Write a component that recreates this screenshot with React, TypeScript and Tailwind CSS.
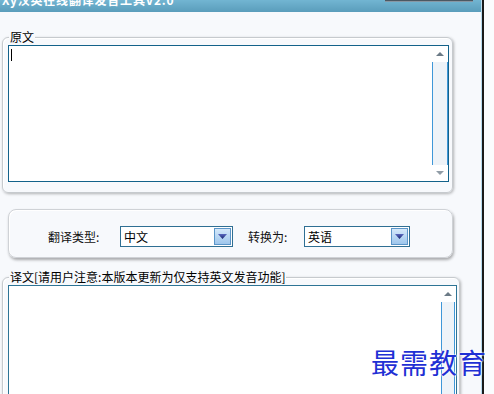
import React from "react";

function ScrollBar({ inset }: { inset?: boolean }) {
  return (
    <div className="w-[16px] h-full flex flex-col shrink-0">
      <div className="h-[16px] flex items-center justify-center">
        <svg width="8" height="4" viewBox="0 0 8 4">
          <polygon points="0,4 4,0 8,4" fill="#6b7a86" />
        </svg>
      </div>
      <div className={`flex-1 border-x border-[#3f97d8] bg-[#eef3f8] ${inset ? "mx-[1px]" : ""}`} />
      <div className="h-[16px] flex items-center justify-center">
        <svg width="8" height="4" viewBox="0 0 8 4">
          <polygon points="0,0 8,0 4,4" fill="#909ca6" />
        </svg>
      </div>
    </div>
  );
}

function DropButton() {
  return (
    <div className="w-[17px] h-[17px] border border-[#5b95c8] bg-gradient-to-b from-[#d4e8fa] to-[#9ec6ec] flex items-center justify-center">
      <svg width="9" height="5" viewBox="0 0 9 5">
        <defs>
          <linearGradient id="tri" x1="0" y1="0" x2="0" y2="1">
            <stop offset="0" stopColor="#5a68c0" />
            <stop offset="1" stopColor="#17246e" />
          </linearGradient>
        </defs>
        <polygon points="0,0 9,0 4.5,5" fill="url(#tri)" />
      </svg>
    </div>
  );
}

function Select({ value, width }: { value: string; width: string }) {
  return (
    <div className={`${width} h-[21px] border border-[#2f6f93] bg-white flex items-center p-[1px]`}>
      <span className="flex-1 pl-[2px] text-[12px] leading-[17px] text-black">{value}</span>
      <DropButton />
    </div>
  );
}

export default function App() {
  return (
    <div className="w-[494px] h-[394px] overflow-hidden relative flex bg-[#fbfcfe] font-['Noto_Sans_CJK_SC','Noto_Sans',sans-serif] text-black">
      <div className="w-[481px] h-full flex flex-col bg-[#f7f9fc] shrink-0">
        {/* title bar */}
        <div className="h-[12px] shrink-0 overflow-hidden bg-gradient-to-b from-[#72b5d2] to-[#5a9dbb] flex items-start">
          <div className="-mt-[6px] ml-[2px] text-white font-bold text-[12px] leading-[12px] tracking-[0.8px] whitespace-nowrap">
            Xy汉英在线翻译发音工具V2.0
          </div>
          <div className="ml-auto mr-[8px] w-[88px] h-[2px] bg-[#4c5863] border-b border-[#8797a4]" />
        </div>

        {/* group 1 */}
        <div className="ml-[2px] mt-[18px] w-[451px] flex flex-col">
          <div className="relative z-10 ml-[7px] px-[1px] w-fit bg-[#f7f9fc] text-[12px] leading-[13px]">原文</div>
          <div className="-mt-[6px] h-[156px] rounded-[6px] border border-[#c6cace] shadow-[1px_1px_3px_rgba(0,0,0,0.28),inset_1px_1px_0_#ffffff] pl-[5px] pr-[3px] pt-[7px] pb-[10px]">
            <div className="w-[441px] h-[137px] border border-[#13628a] bg-white flex">
              <div className="flex-1">
                <div className="ml-[2px] mt-[3px] w-[1px] h-[12px] bg-black" />
              </div>
              <ScrollBar />
            </div>
          </div>
        </div>

        {/* group 2 */}
        <div className="ml-[8px] mt-[16px] w-[445px] h-[49px] shrink-0 rounded-[8px] border border-[#cfd2d6] shadow-[1px_2px_3px_rgba(0,0,0,0.32),inset_1px_1px_0_#ffffff] pt-[16px] pl-[39px] flex items-start">
          <div className="w-[72px] h-[21px] flex items-center text-[12px] leading-[13px] text-[#111]">翻译类型:</div>
          <Select value="中文" width="w-[113px]" />
          <div className="ml-[15px] w-[56px] h-[21px] flex items-center text-[12px] leading-[13px] text-[#111]">转换为:</div>
          <Select value="英语" width="w-[106px]" />
        </div>

        {/* group 3 */}
        <div className="ml-[2px] mt-[12px] w-[458px] flex flex-col">
          <div className="relative z-10 ml-[7px] px-[1px] w-fit bg-[#f7f9fc] text-[12px] leading-[13px] whitespace-nowrap">
            译文[请用户注意:本版本更新为仅支持英文发音功能]
          </div>
          <div className="-mt-[6px] h-[150px] rounded-[6px] border border-[#c6cace] shadow-[1px_1px_3px_rgba(0,0,0,0.28),inset_1px_1px_0_#ffffff] pl-[5px] pr-[2px] pt-[7px]">
            <div className="w-[449px] h-[140px] border border-[#2d7495] bg-white flex">
              <div className="flex-1" />
              <ScrollBar inset />
            </div>
          </div>
        </div>
      </div>
      <div className="w-[1px] h-full bg-[#b9dbef] shrink-0" />
      <div className="w-[2px] h-full bg-[#1a1a1a] shrink-0" />
      <div className="flex-1 h-full bg-[#fbfcfe]" />

      {/* watermark */}
      <div className="absolute left-[371px] top-[344px] text-[28px] leading-[36px] tracking-[1px] text-[#1f30d4] whitespace-nowrap font-['Noto_Sans_CJK_SC',serif] [text-shadow:0_0_2px_#fff,0_0_2px_#fff,0_0_1px_#fff]">
        最需教育
      </div>
    </div>
  );
}
